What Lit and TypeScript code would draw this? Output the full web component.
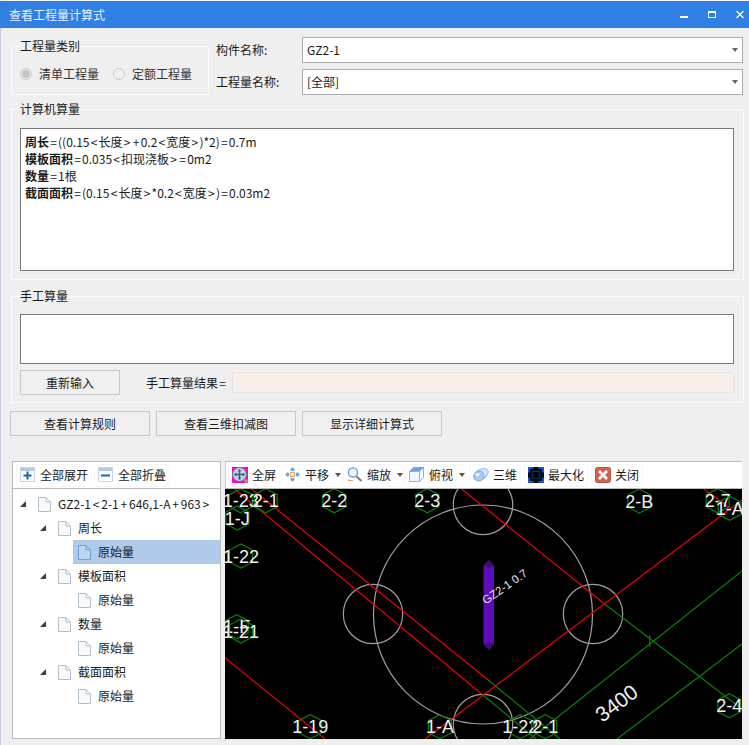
import { LitElement, html, svg, css } from "lit";
import { customElement } from "lit/decorators.js";

// tree rows of the quantity breakdown
const TREE = [
  { level: 0, text: "GZ2-1<2-1+646,1-A+963>", arrow: true },
  { level: 1, text: "周长", arrow: true },
  { level: 2, text: "原始量", selected: true },
  { level: 1, text: "模板面积", arrow: true },
  { level: 2, text: "原始量" },
  { level: 1, text: "数量", arrow: true },
  { level: 2, text: "原始量" },
  { level: 1, text: "截面面积", arrow: true },
  { level: 2, text: "原始量" },
];

const FORMULAS = [
  ["周长", "=((0.15<长度>+0.2<宽度>)*2)=0.7m"],
  ["模板面积", "=0.035<扣现浇板>=0m2"],
  ["数量", "=1根"],
  ["截面面积", "=(0.15<长度>*0.2<宽度>)=0.03m2"],
];

// drawing coordinates are screenshot pixels, see the viewBox on the canvas
const RED = [
  [251.7, 489, 487, 679],
  [234.7, 489, 481.7, 694],
  [461.7, 489, 603.7, 603.3],
  [425, 739, 742, 500],
  [703.7, 489, 730, 508],
  [225, 657.7, 325, 739],
];

const GREEN = [
  [603.7, 603.3, 742, 709],
  [487, 679, 560, 739],
  [481.7, 694, 536, 739],
  [530, 739, 742, 571],
  [617, 739, 742, 644],
  [649.7, 635, 649.7, 647],
];

const CIRCLES = [
  [483, 614.5, 109.5],
  [373, 614, 29.7],
  [593, 614, 29.7],
  [483, 505, 29.7],
  [483, 724, 29.7],
];

const AXES: [string, number, number][] = [
  ["1-23", 240.7, 500.7],
  ["2-1", 265.7, 500.7],
  ["1-J", 237.3, 518],
  ["2-2", 334.3, 500.7],
  ["2-3", 427.3, 500.7],
  ["1-22", 241, 556],
  ["1-F", 236.7, 626.7],
  ["1-21", 241, 631],
  ["1-19", 310.3, 726.7],
  ["1-A", 440, 726.7],
  ["2-B", 639.3, 501],
  ["2-7", 717.7, 500.7],
  ["1-A", 729.7, 508.3],
  ["2-4", 729.3, 705.7],
  ["1-22", 520.3, 726.7],
  ["2-1", 545.3, 726.7],
];

const hex = (x: number, y: number) =>
  `${x},${y - 12} ${x + 11.5},${y - 6} ${x + 11.5},${y + 6} ${x},${y + 12} ${x - 11.5},${y + 6} ${x - 11.5},${y - 6}`;

// the math signs sit wider in the original font
const spaced = (text: string) =>
  text.split(/([=<>+])/).map((part) => (/^[=<>+]$/.test(part) ? html`<span class="sym">${part}</span>` : part));

const ICONS: Record<string, unknown> = {
  full: svg`
    <rect x="0" y="0" width="16" height="16" fill="#ff00e0" />
    <circle cx="7.5" cy="7.5" r="7" fill="#c3d0df" stroke="#66707e" />
    <path d="M7.5 2.5v10M2.5 7.5h10" stroke="#2f5c92" stroke-width="1.4" />
    <path d="M5.8 4.2 7.5 2.2 9.2 4.2ZM5.8 10.8 7.5 12.8 9.2 10.8ZM4.2 5.8 2.2 7.5 4.2 9.2ZM10.8 5.8 12.8 7.5 10.8 9.2Z" fill="#2f5c92" />
    <rect x="12.5" y="12.5" width="3" height="3" fill="#d9a23a" />`,
  pan: svg`
    <path d="M7.5 0 10 3 7.5 4.5 5 3ZM7.5 15 10 12 7.5 10.5 5 12ZM0 7.5 3 5 4.5 7.5 3 10ZM15 7.5 12 5 10.5 7.5 12 10Z" fill="#6e9fdc" />
    <rect x="5.5" y="5.5" width="4" height="4" fill="#fff" stroke="#e8a860" />`,
  zoom: svg`
    <circle cx="6" cy="5.5" r="4.6" fill="#eef6fd" stroke="#5b9bd8" stroke-width="1.3" />
    <path d="M9.5 9.5 14.5 14" stroke="#7c7c7c" stroke-width="2" />
    <path d="M1 13.5h5M1 13.5l1.5-1.5" stroke="#e9a15f" fill="none" />`,
  top: svg`
    <path d="M.5 4.5 4.5.5h10v10l-4 4H.5Z" fill="#f2f7fd" stroke="#8fb4e2" />
    <path d="M.5 4.5 4.5.5h10l-4 4Z" fill="#6fa3e2" stroke="#6fa3e2" />
    <path d="M.5 4.5h10v10M10.5 4.5l4-4" fill="none" stroke="#8fb4e2" />`,
  three: svg`
    <ellipse cx="8" cy="7.5" rx="8" ry="5" transform="rotate(-32 8 7.5)" fill="#cfe2f8" stroke="#9cc0ea" />
    <ellipse cx="6" cy="9" rx="5" ry="5" fill="#a9cbf2" stroke="#7faee4" />
    <ellipse cx="4.5" cy="7.5" rx="2.2" ry="1.6" fill="#eaf3fd" />`,
  max: svg`
    <rect x="0" y="0" width="16" height="16" fill="#020a18" />
    <path d="M0 5V0h5M11 0h5v5M16 11v5h-5M5 16H0v-5" transform="translate(1 1) scale(.875)" fill="none" stroke="#1357c8" stroke-width="2.4" />
    <rect x="4.5" y="4.5" width="7" height="7" fill="none" stroke="#1c4fa8" stroke-dasharray="1 1" />`,
  close: svg`
    <rect x=".5" y=".5" width="15" height="15" rx="2" fill="#d9604f" stroke="#a8584c" />
    <path d="M4 4 12 12M12 4 4 12" stroke="#fff" stroke-width="2.6" />`,
  plus: svg`
    <rect x=".5" y=".5" width="14" height="14" fill="#fff" stroke="#c6d3ef" />
    <rect x="1" y="1" width="13" height="3" fill="#b9c4ee" />
    <path d="M7.5 4.5v8M3.5 8.5h8" stroke="#0f6cb4" stroke-width="2" />`,
  minus: svg`
    <rect x=".5" y=".5" width="14" height="14" fill="#fff" stroke="#c6d3ef" />
    <rect x="1" y="1" width="13" height="3" fill="#b9c4ee" />
    <path d="M3 8.5h9" stroke="#0f6cb4" stroke-width="2" />`,
};

@customElement("app-root")
export class AppRoot extends LitElement {
  static styles = css`
    :host {
      display: block;
      width: 749px;
      height: 745px;
      overflow: hidden;
      background: #efefef;
      font: 12px/18px "Noto Sans CJK SC", "Liberation Sans", sans-serif;
      color: #1a1a1a;
    }
    * {
      box-sizing: border-box;
    }
    .window {
      height: 745px;
      border-top: 1px solid #f4f4f4;
      border-left: 1px solid #c3cadd;
    }
    .titlebar {
      height: 27px;
      margin-left: -1px;
      padding-left: 9px;
      display: flex;
      align-items: center;
      background: #2f80e2;
      color: #e6f0fb;
    }
    .title {
      flex: 1;
    }
    .controls {
      display: block;
      width: 749px;
      height: 27px;
      position: absolute;
      left: 0;
      top: 1px;
    }
    .main {
      padding: 9px 5px 0 10px;
    }
    fieldset {
      margin: 0;
      padding: 0;
      border: 1px solid #fbfbfb;
      min-width: 0;
    }
    legend {
      padding: 0;
      line-height: 18px;
    }
    .sym {
      padding: 0 1.2px;
    }
    .top {
      display: flex;
      height: 58px;
    }
    .kind {
      width: 198px;
      height: 58px;
    }
    .kind legend {
      margin-left: 8px;
    }
    .radios {
      height: 38px;
      padding-left: 8px;
      display: flex;
      align-items: center;
      color: #333;
    }
    .radio {
      width: 12px;
      height: 12px;
      margin-right: 7px;
      border: 1px solid #c9c9c9;
      border-radius: 50%;
      background: #f0f0f0;
      display: flex;
      align-items: center;
      justify-content: center;
    }
    .radio + span {
      margin-right: 14px;
    }
    .radio.on::after {
      content: "";
      width: 8px;
      height: 8px;
      border-radius: 50%;
      background: #c4c4c4;
    }
    .fields {
      margin-left: 7px;
      width: 527px;
      display: grid;
      grid-template-columns: 86px 441px;
      grid-auto-rows: 26px;
      row-gap: 6px;
      align-items: center;
    }
    .combo {
      height: 26px;
      padding-left: 4px;
      border: 1px solid #acacac;
      background: #fff;
      display: flex;
      align-items: center;
      justify-content: space-between;
    }
    .combo i {
      margin-right: 4px;
      border-top: 4px solid #666;
      border-left: 3px solid transparent;
      border-right: 3px solid transparent;
    }
    .computer {
      margin-top: 5px;
      height: 180px;
      padding: 10px 9px 0 8px;
    }
    .formula {
      height: 143px;
      padding: 4px 4px;
      border: 1px solid #7a7a7a;
      background: #fff;
      line-height: 17px;
    }
    .formula b {
      font-weight: 700;
    }
    .manual {
      margin-top: 7px;
      height: 116px;
      padding: 9px 9px 0 8px;
    }
    .input {
      height: 50px;
      border: 1px solid #7a7a7a;
      background: #fff;
    }
    .redo {
      margin-top: 6px;
      display: flex;
      align-items: center;
    }
    button {
      height: 25px;
      padding: 0;
      border: 1px solid #c8c8c8;
      background: #f0f0f0;
      font: inherit;
      color: inherit;
    }
    .redo button {
      width: 100px;
      margin-right: 26px;
    }
    .result {
      flex: 1;
      height: 21px;
      margin-left: 5px;
      border: 1px solid #e4e4e4;
      background: #f8f0e8;
    }
    .actions {
      margin-top: 8px;
      margin-left: -1px;
      display: flex;
      gap: 6px;
    }
    .actions button {
      width: 140px;
    }
    .bottom {
      margin-top: 25px;
      display: flex;
      height: 278px;
    }
    .side {
      width: 209px;
      margin-left: 1px;
      border: 1px solid #bbb;
      background: #fff;
    }
    .bar {
      height: 27px;
      display: flex;
      align-items: center;
      border-bottom: 1px solid #bbb;
    }
    .side .bar {
      padding-left: 3px;
      gap: 2px;
    }
    .tool {
      height: 23px;
      padding: 0 3px;
      display: flex;
      align-items: center;
      gap: 4px;
      border: 1px solid #f7f7f7;
      border-radius: 3px;
      white-space: nowrap;
    }
    .tool svg {
      flex: none;
    }
    .caret {
      margin-left: 2px;
      margin-right: -3px;
      border-top: 4px solid #555;
      border-left: 3px solid transparent;
      border-right: 3px solid transparent;
    }
    .tree {
      padding-top: 3px;
    }
    .row {
      height: 24px;
      display: flex;
      align-items: center;
      white-space: nowrap;
    }
    .row .sym {
      padding: 0 1.8px;
    }
    .row.l0 {
      padding-left: 7px;
    }
    .row.l1 {
      padding-left: 27px;
    }
    .row.l2 {
      margin-left: 60px;
      padding-left: 5px;
    }
    .row.selected {
      background: #b0cbea;
    }
    .arrow {
      width: 18px;
      flex: none;
    }
    .row .doc {
      margin-right: 7px;
      flex: none;
    }
    .view {
      width: 517px;
      margin-left: 4px;
      border-top: 1px solid #bbb;
      background: #fff;
      display: flex;
      flex-direction: column;
    }
    .view .bar {
      border-left: 1px solid #ccc;
      padding-left: 2px;
      gap: 1px;
    }
    .view .tool.wide {
      margin-left: 2px;
    }
    .canvas {
      display: block;
      width: 517px;
      height: 250px;
      background: #000;
    }
    .axis {
      font: 18px "Liberation Sans", sans-serif;
      fill: #f0f0f0;
      text-anchor: middle;
    }
    .dim {
      font: 21px "Liberation Sans", sans-serif;
      fill: #f0f0f0;
      text-anchor: middle;
    }
    .tag {
      font: 11.5px "Liberation Sans", sans-serif;
      fill: #e8e0f8;
      text-anchor: middle;
    }
  `;

  private icon(name: string, size = 16) {
    return html`<svg width=${size} height=${size} viewBox="0 0 ${size} ${size}">${ICONS[name]}</svg>`;
  }

  private tool(name: string, label: string, caret = false, wide = false) {
    return html`<div class="tool ${wide ? "wide" : ""}">
      ${this.icon(name)}<span>${label}</span>${caret ? html`<i class="caret"></i>` : ""}
    </div>`;
  }

  private doc(selected = false) {
    return html`<svg class="doc" width="13" height="15" viewBox="0 0 13 15">
      <path
        d="M.5.5h7.5l4.5 4.5v9.500H.5Z"
        fill=${selected ? "#bcd6f2" : "#f8fafc"}
        stroke=${selected ? "#6f9ed3" : "#b4bfcd"}
      />
      <path d="M8 .5v4.500h4.500" fill="none" stroke=${selected ? "#6f9ed3" : "#b4bfcd"} />
    </svg>`;
  }

  private renderCanvas() {
    return svg`
      <svg class="canvas" viewBox="225 489 517 250">
        ${CIRCLES.map(([x, y, r]) => svg`<circle cx=${x} cy=${y} r=${r} fill="none" stroke="#a0a0a0" stroke-width="1.2" />`)}
        ${GREEN.map(([a, b, c, d]) => svg`<line x1=${a} y1=${b} x2=${c} y2=${d} stroke="#0b800b" stroke-width="1.2" />`)}
        ${RED.map(([a, b, c, d]) => svg`<line x1=${a} y1=${b} x2=${c} y2=${d} stroke="#f00000" stroke-width="1.2" />`)}

        <!-- the column -->
        <polygon points="483.500,566 489,560 494,566 494,644 489,650 483.500,644" fill="#5c0cb8" />
        <polygon points="483.500,566 489,560 494,566 489,568" fill="#3c0f78" />
        <polygon points="483.500,644 489,642 494,644 489,650" fill="#3c0f78" />
        <text class="tag" transform="translate(507 590) rotate(-35)">GZ2-1 0.7</text>

        ${AXES.map(([t, x, y]) => svg`
          <polygon points=${hex(x, y)} fill="none" stroke="#0b800b" stroke-width="1.2" />
          <text class="axis" x=${x} y=${y + 6.5}>${t}</text>
        `)}
        <text class="dim" transform="translate(621 709) rotate(-37)">3400</text>
        <text class="dim" transform="translate(568 752) rotate(-37)">0</text>
      </svg>
    `;
  }

  render() {
    return html`
      <div class="window">
        <div class="titlebar"><span class="title">查看工程量计算式</span></div>
        <svg class="controls" viewBox="0 0 749 27" fill="none" stroke="#fff">
          <rect x="680" y="15" width="8" height="2" fill="#fff" stroke="none" />
          <rect x="708.500" y="10.500" width="7" height="6" />
          <path d="M708 11h8" stroke-width="2" />
          <path d="M736.500 10 743.500 17M743.500 10 736.500 17" stroke-width="1.300" />
        </svg>
        <div class="main">
          <div class="top">
            <fieldset class="kind">
              <legend>工程量类别</legend>
              <div class="radios">
                <i class="radio on"></i><span>清单工程量</span>
                <i class="radio"></i><span>定额工程量</span>
              </div>
            </fieldset>
            <div class="fields">
              <span>构件名称:</span>
              <div class="combo"><span>GZ2-1</span><i></i></div>
              <span>工程量名称:</span>
              <div class="combo"><span>[全部]</span><i></i></div>
            </div>
          </div>

          <fieldset class="computer">
            <legend>计算机算量</legend>
            <div class="formula">
              ${FORMULAS.map(([k, v]) => html`<div><b>${k}</b>${spaced(v)}</div>`)}
            </div>
          </fieldset>

          <fieldset class="manual">
            <legend>手工算量</legend>
            <div class="input"></div>
            <div class="redo">
              <button>重新输入</button>
              <span>手工算量结果${spaced("=")}</span>
              <div class="result"></div>
            </div>
          </fieldset>

          <div class="actions">
            <button>查看计算规则</button>
            <button>查看三维扣减图</button>
            <button>显示详细计算式</button>
          </div>

          <div class="bottom">
            <div class="side">
              <div class="bar">
                ${this.tool("plus", "全部展开")}
                ${this.tool("minus", "全部折叠")}
              </div>
              <div class="tree">
                ${TREE.map(
                  (r) => html`<div class="row l${r.level} ${r.selected ? "selected" : ""}">
                    ${r.arrow
                      ? html`<svg class="arrow" height="6" viewBox="0 0 18 6"><polygon points="0,6 6,6 6,0" fill="#3c3c3c" /></svg>`
                      : ""}
                    ${this.doc(r.selected)}<span>${spaced(r.text)}</span>
                  </div>`,
                )}
              </div>
            </div>
            <div class="view">
              <div class="bar">
                ${this.tool("full", "全屏")}
                ${this.tool("pan", "平移", true)}
                ${this.tool("zoom", "缩放", true)}
                ${this.tool("top", "俯视", true)}
                ${this.tool("three", "三维", false, true)}
                ${this.tool("max", "最大化", false, true)}
                ${this.tool("close", "关闭", false, true)}
              </div>
              ${this.renderCanvas()}
            </div>
          </div>
        </div>
      </div>
    `;
  }
}
